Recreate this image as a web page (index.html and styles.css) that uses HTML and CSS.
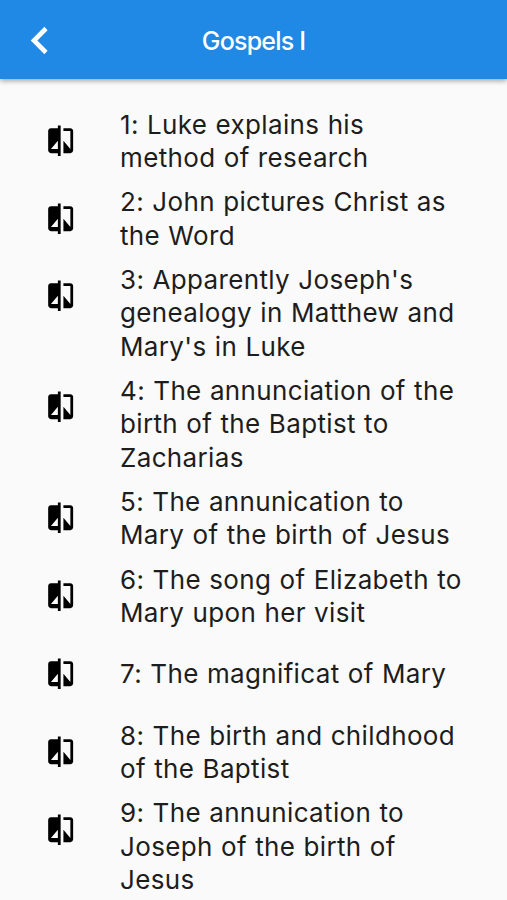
FILE: index.html
```html
<!DOCTYPE html>
<html lang="en">
<head>
<meta charset="utf-8">
<title>Gospels I</title>
<link rel="stylesheet" href="styles.css">
</head>
<body>
<svg class="defs" aria-hidden="true"><symbol id="compare" viewBox="0 0 24 24"><path d="M10 3H5c-1.1 0-2 .9-2 2v14c0 1.1.9 2 2 2h5v2h2V1h-2v2zm0 15H5l5-6v6zm9-15h-5v2h5v13l-5-6v9h5c1.1 0 2-.9 2-2V5c0-1.1-.9-2-2-2z"/></symbol></svg>
<header class="bar">
<svg class="back" viewBox="0 0 20 30"><path d="M17 3.5L5 15.5l12 12"/></svg>
<h1>Gospels I</h1>
</header>
<main class="list">
<div class="row"><svg class="icon"><use href="#compare"/></svg><p>1: Luke explains his<br>method of research</p></div>
<div class="row"><svg class="icon"><use href="#compare"/></svg><p>2: John pictures Christ as<br>the Word</p></div>
<div class="row tall"><svg class="icon"><use href="#compare"/></svg><p>3: Apparently Joseph's<br>genealogy in Matthew and<br>Mary's in Luke</p></div>
<div class="row tall"><svg class="icon"><use href="#compare"/></svg><p>4: The annunciation of the<br>birth of the Baptist to<br>Zacharias</p></div>
<div class="row"><svg class="icon"><use href="#compare"/></svg><p>5: The annunication to<br>Mary of the birth of Jesus</p></div>
<div class="row"><svg class="icon"><use href="#compare"/></svg><p>6: The song of Elizabeth to<br>Mary upon her visit</p></div>
<div class="row"><svg class="icon"><use href="#compare"/></svg><p>7: The magnificat of Mary</p></div>
<div class="row"><svg class="icon"><use href="#compare"/></svg><p>8: The birth and childhood<br>of the Baptist</p></div>
<div class="row tall"><svg class="icon"><use href="#compare"/></svg><p>9: The annunication to<br>Joseph of the birth of<br>Jesus</p></div>
</main>
</body>
</html>
```
FILE: styles.css
```css
* { box-sizing: border-box; }
body { margin: 0; height: 900px; overflow: hidden; background: #fafafa; color: #1d1d1d; font-family: Inter, sans-serif; }
.defs { display: none; }
.bar { display: grid; grid-template-columns: 80px 1fr 80px; align-items: center; height: 79px; background: #2088e5; color: #fff; box-shadow: 0 2px 5px rgba(0,0,0,.35); }
.back { width: 20px; height: 30px; margin: 1px 0 0 28.5px; fill: none; stroke: #fff; stroke-width: 4.6; }
h1 { margin: 3px 0 0; text-align: center; font-size: 25px; font-weight: 500; letter-spacing: -.8px; }
.list { padding-top: 102px; margin-top: -79px; }
.row { display: grid; grid-template-columns: 120px 1fr; align-items: center; height: 77.8px; }
.tall { height: 111px; align-items: start; padding-top: 5.5px; }
.icon { width: 33.3px; height: 33.3px; margin: -1px 0 0 43.7px; fill: #000; }
.tall .icon { margin-top: 16.3px; }
p { margin: 0; font-size: 26px; line-height: 33.3px; letter-spacing: .35px; word-spacing: .6px; white-space: nowrap; }
```
